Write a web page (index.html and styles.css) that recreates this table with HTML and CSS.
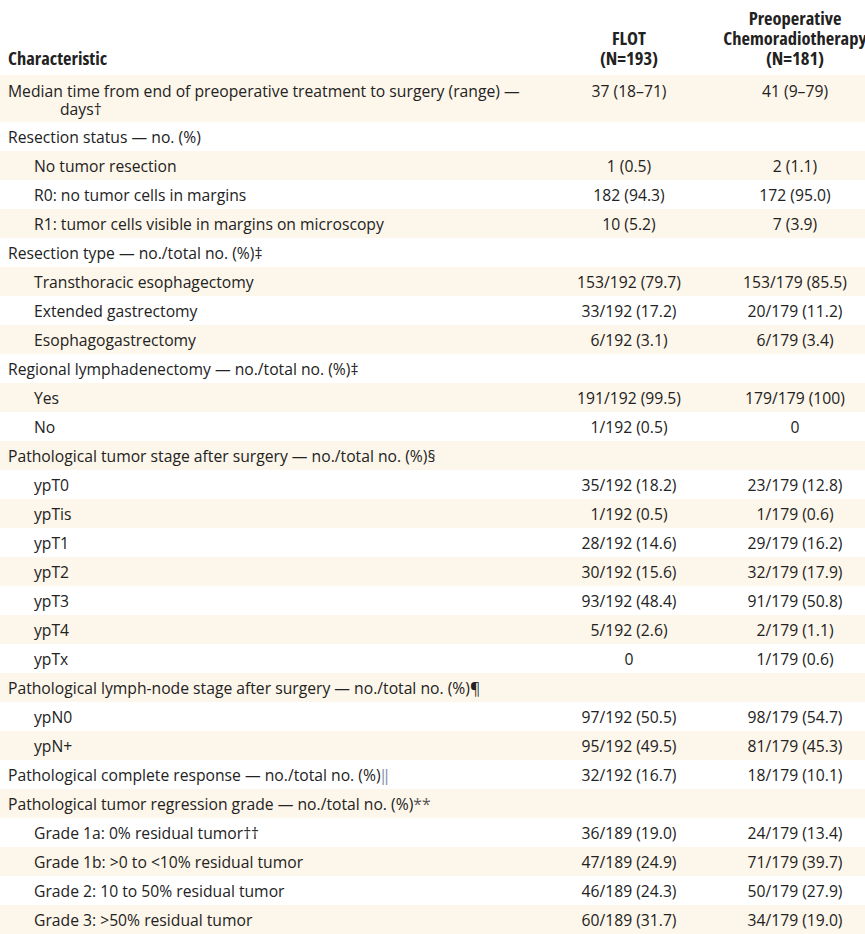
FILE: index.html
```html
<!DOCTYPE html>
<html lang="en">
<head>
<meta charset="utf-8">
<title>Surgical outcomes</title>
<link rel="stylesheet" href="styles.css">
</head>
<body>
<table class="results">
  <colgroup>
    <col class="col-label">
    <col class="col-num">
    <col class="col-num">
  </colgroup>
  <thead>
    <tr>
      <th class="h-label">Characteristic</th>
      <th class="h-num">FLOT<br>(N=193)</th>
      <th class="h-num">Preoperative<br>Chemoradiotherapy<br>(N=181)</th>
    </tr>
  </thead>
  <tbody>
    <tr class="tall"><td class="label hang">Median time from end of preoperative treatment to surgery (range) — days<span class="mark">†</span></td><td>37 (18–71)</td><td>41 (9–79)</td></tr>
    <tr><td class="label">Resection status — no. (%)</td><td></td><td></td></tr>
    <tr><td class="label sub">No tumor resection</td><td>1 (0.5)</td><td>2 (1.1)</td></tr>
    <tr><td class="label sub">R0: no tumor cells in margins</td><td>182 (94.3)</td><td>172 (95.0)</td></tr>
    <tr><td class="label sub">R1: tumor cells visible in margins on microscopy</td><td>10 (5.2)</td><td>7 (3.9)</td></tr>
    <tr><td class="label">Resection type — no./total no. (%)<span class="mark">‡</span></td><td></td><td></td></tr>
    <tr><td class="label sub">Transthoracic esophagectomy</td><td>153/192 (79.7)</td><td>153/179 (85.5)</td></tr>
    <tr><td class="label sub">Extended gastrectomy</td><td>33/192 (17.2)</td><td>20/179 (11.2)</td></tr>
    <tr><td class="label sub">Esophagogastrectomy</td><td>6/192 (3.1)</td><td>6/179 (3.4)</td></tr>
    <tr><td class="label">Regional lymphadenectomy — no./total no. (%)<span class="mark">‡</span></td><td></td><td></td></tr>
    <tr><td class="label sub">Yes</td><td>191/192 (99.5)</td><td>179/179 (100)</td></tr>
    <tr><td class="label sub">No</td><td>1/192 (0.5)</td><td>0</td></tr>
    <tr><td class="label">Pathological tumor stage after surgery — no./total no. (%)<span class="mark">§</span></td><td></td><td></td></tr>
    <tr><td class="label sub">ypT0</td><td>35/192 (18.2)</td><td>23/179 (12.8)</td></tr>
    <tr><td class="label sub">ypTis</td><td>1/192 (0.5)</td><td>1/179 (0.6)</td></tr>
    <tr><td class="label sub">ypT1</td><td>28/192 (14.6)</td><td>29/179 (16.2)</td></tr>
    <tr><td class="label sub">ypT2</td><td>30/192 (15.6)</td><td>32/179 (17.9)</td></tr>
    <tr><td class="label sub">ypT3</td><td>93/192 (48.4)</td><td>91/179 (50.8)</td></tr>
    <tr><td class="label sub">ypT4</td><td>5/192 (2.6)</td><td>2/179 (1.1)</td></tr>
    <tr><td class="label sub">ypTx</td><td>0</td><td>1/179 (0.6)</td></tr>
    <tr><td class="label">Pathological lymph-node stage after surgery — no./total no. (%)<span class="mark">¶</span></td><td></td><td></td></tr>
    <tr><td class="label sub">ypN0</td><td>97/192 (50.5)</td><td>98/179 (54.7)</td></tr>
    <tr><td class="label sub">ypN+</td><td>95/192 (49.5)</td><td>81/179 (45.3)</td></tr>
    <tr><td class="label">Pathological complete response — no./total no. (%)<span class="mark bar">‖</span></td><td>32/192 (16.7)</td><td>18/179 (10.1)</td></tr>
    <tr><td class="label">Pathological tumor regression grade — no./total no. (%)<span class="mark star">**</span></td><td></td><td></td></tr>
    <tr><td class="label sub">Grade 1a: 0% residual tumor<span class="mark">††</span></td><td>36/189 (19.0)</td><td>24/179 (13.4)</td></tr>
    <tr><td class="label sub">Grade 1b: &gt;0 to &lt;10% residual tumor</td><td>47/189 (24.9)</td><td>71/179 (39.7)</td></tr>
    <tr><td class="label sub">Grade 2: 10 to 50% residual tumor</td><td>46/189 (24.3)</td><td>50/179 (27.9)</td></tr>
    <tr><td class="label sub">Grade 3: &gt;50% residual tumor</td><td>60/189 (31.7)</td><td>34/179 (19.0)</td></tr>
  </tbody>
</table>
</body>
</html>
```
FILE: styles.css
```css
html, body {
  margin: 0;
  padding: 0;
  background: #ffffff;
  overflow: hidden;
}

.results {
  border-collapse: collapse;
  border-spacing: 0;
  width: 878px;
  table-layout: fixed;
  font-family: "Open Sans", "Noto Sans", sans-serif;
  font-size: 15.7px;
  color: #222222;
}

.col-label { width: 546px; }
.col-num { width: 166px; }

.results thead th {
  height: 68px;
  padding: 0 0 7px 0;
  vertical-align: bottom;
  font-family: "Open Sans", "Noto Sans", sans-serif;
  font-stretch: 75%;
  font-weight: bold;
  font-size: 18.5px;
  line-height: 20px;
  color: #222222;
}

.results th.h-label {
  text-align: left;
  padding-left: 8px;
}

.results th.h-num {
  text-align: center;
}

.results tbody td {
  height: 29px;
  padding: 0;
  text-align: center;
  vertical-align: middle;
  line-height: 20px;
  white-space: nowrap;
}

.results tbody tr:nth-child(odd) {
  background: #fdf6ea;
}

.results tbody tr.tall td {
  height: 40px;
  vertical-align: top;
  padding-top: 7px;
  line-height: 18px;
}

.results td.label {
  text-align: left;
  padding-left: 8px;
}

.results td.sub {
  padding-left: 34px;
}

.results td.hang {
  white-space: normal;
  padding-left: 60px;
  padding-right: 24px;
  text-indent: -52px;
}

.mark.bar {
  color: #8290ad;
}

.mark.star {
  color: #555555;
}
```
